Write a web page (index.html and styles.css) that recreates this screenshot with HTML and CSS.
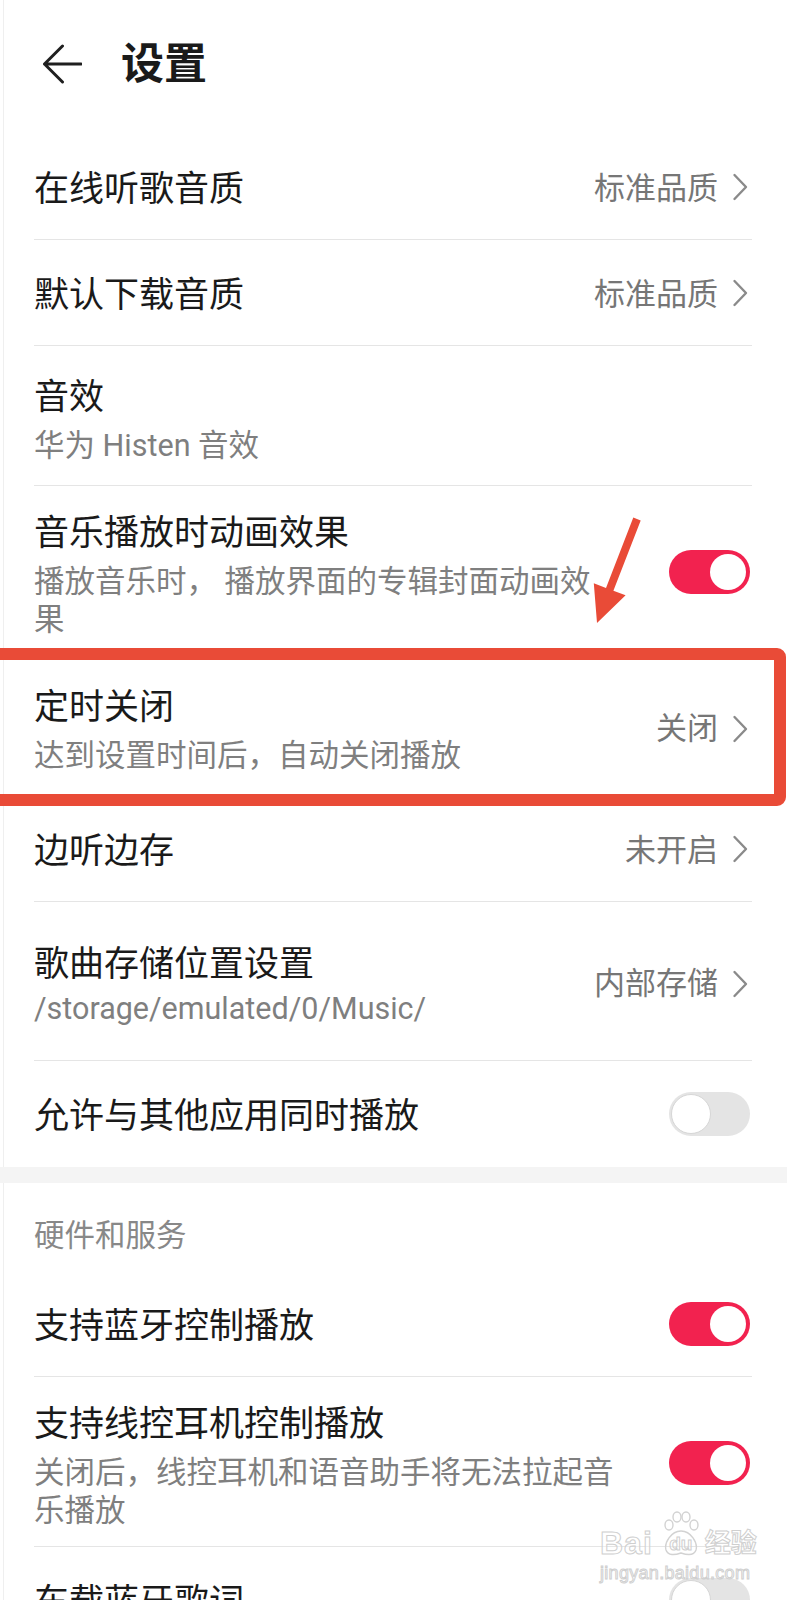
FILE: index.html
```html
<!DOCTYPE html>
<html lang="zh-CN">
<head>
<meta charset="utf-8">
<title>设置</title>
<link rel="stylesheet" href="styles.css">
</head>
<body>
<div class="page">
  <header class="topbar">
    <svg class="back" viewBox="0 0 40 40"><path d="M39 20H2.5M20.5 2L2.5 20L20.5 38" fill="none" stroke="#1f1f1f" stroke-width="3" stroke-linecap="round" stroke-linejoin="round"/></svg>
    <h1 class="title">设置</h1>
  </header>

  <section class="group">
    <div class="row">
      <div class="text"><div class="label">在线听歌音质</div></div>
      <div class="value">标准品质</div>
      <svg class="chev" viewBox="0 0 16 28"><polyline points="2.5,2 14,14 2.5,26" fill="none" stroke="#8a8a8a" stroke-width="2.4" stroke-linecap="round" stroke-linejoin="round"/></svg>
    </div>
    <div class="row">
      <div class="text"><div class="label">默认下载音质</div></div>
      <div class="value">标准品质</div>
      <svg class="chev" viewBox="0 0 16 28"><polyline points="2.5,2 14,14 2.5,26" fill="none" stroke="#8a8a8a" stroke-width="2.4" stroke-linecap="round" stroke-linejoin="round"/></svg>
    </div>
    <div class="row two">
      <div class="text">
        <div class="label">音效</div>
        <div class="desc">华为 Histen 音效</div>
      </div>
    </div>
    <div class="row three">
      <div class="text">
        <div class="label">音乐播放时动画效果</div>
        <div class="desc">播放音乐时， 播放界面的专辑封面动画效果</div>
      </div>
      <div class="switch on"><span class="knob"></span></div>
    </div>
    <div class="row two">
      <div class="text">
        <div class="label">定时关闭</div>
        <div class="desc">达到设置时间后，自动关闭播放</div>
      </div>
      <div class="value">关闭</div>
      <svg class="chev" viewBox="0 0 16 28"><polyline points="2.5,2 14,14 2.5,26" fill="none" stroke="#8a8a8a" stroke-width="2.4" stroke-linecap="round" stroke-linejoin="round"/></svg>
    </div>
    <div class="row">
      <div class="text"><div class="label">边听边存</div></div>
      <div class="value">未开启</div>
      <svg class="chev" viewBox="0 0 16 28"><polyline points="2.5,2 14,14 2.5,26" fill="none" stroke="#8a8a8a" stroke-width="2.4" stroke-linecap="round" stroke-linejoin="round"/></svg>
    </div>
    <div class="row path">
      <div class="text">
        <div class="label">歌曲存储位置设置</div>
        <div class="desc">/storage/emulated/0/Music/</div>
      </div>
      <div class="value">内部存储</div>
      <svg class="chev" viewBox="0 0 16 28"><polyline points="2.5,2 14,14 2.5,26" fill="none" stroke="#8a8a8a" stroke-width="2.4" stroke-linecap="round" stroke-linejoin="round"/></svg>
    </div>
    <div class="row last">
      <div class="text"><div class="label">允许与其他应用同时播放</div></div>
      <div class="switch off"><span class="knob"></span></div>
    </div>
  </section>

  <div class="band"></div>

  <section class="group">
    <div class="group-title">硬件和服务</div>
    <div class="row">
      <div class="text"><div class="label">支持蓝牙控制播放</div></div>
      <div class="switch on"><span class="knob"></span></div>
    </div>
    <div class="row three">
      <div class="text">
        <div class="label">支持线控耳机控制播放</div>
        <div class="desc">关闭后，线控耳机和语音助手将无法拉起音乐播放</div>
      </div>
      <div class="switch on"><span class="knob"></span></div>
    </div>
    <div class="row">
      <div class="text"><div class="label">车载蓝牙歌词</div></div>
      <div class="switch off"><span class="knob"></span></div>
    </div>
  </section>

  <div class="highlight"></div>
  <svg class="pointer" viewBox="0 0 80 130"><polygon points="53.3,17.6 26,87.9 13.8,83.3 17,123 45.6,95.3 33.4,90.7 60.7,20.4" fill="#e94b37"/></svg>

  <div class="watermark">
    <div class="wm-line">
      <span class="wm-bai">Bai</span>
      <span class="wm-du">
        <svg class="wm-paw" viewBox="0 0 40 46"><g fill="none" stroke="#d2d2d2" stroke-width="1.4"><ellipse cx="8" cy="14" rx="4" ry="5"/><ellipse cx="16" cy="6" rx="4" ry="5"/><ellipse cx="25" cy="6" rx="4" ry="5"/><ellipse cx="33" cy="14" rx="4" ry="5"/><path d="M20 20C10 20 3 32 5 39C7 45 14 44 20 42C26 44 33 45 35 39C37 32 30 20 20 20Z"/></g></svg>
        <span class="wm-du-text">du</span>
      </span>
      <span class="wm-jy">经验</span>
    </div>
    <div class="wm-url">jingyan.baidu.com</div>
  </div>
</div>
</body>
</html>
```

FILE: styles.css
```css
* {
  box-sizing: border-box;
  margin: 0;
  padding: 0;
}

html, body {
  background: #ffffff;
}

body {
  font-family: Roboto, "Noto Sans CJK SC", sans-serif;
  color: #1a1a1a;
  width: 787px;
}

.page {
  position: relative;
  width: 787px;
  height: 1600px;
  overflow: hidden;
  background: #ffffff;
  box-shadow: inset 3px 0 0 #ffffff, inset 4px 0 0 #efefef;
}

/* top bar */
.topbar {
  height: 134px;
  padding: 0 0 6px 42px;
  display: flex;
  align-items: center;
}

.back {
  width: 40px;
  height: 40px;
  flex: none;
}

.title {
  margin-left: 39px;
  font-size: 43px;
  line-height: 50px;
  font-weight: 700;
  color: #1a1a1a;
}

/* list */
.group {
  padding: 0 35px 0 34px;
}

.row {
  display: flex;
  align-items: center;
  min-height: 106px;
  border-bottom: 1px solid #e5e5e5;
}

.row.last {
  border-bottom: none;
}

.row.two {
  padding: 26px 0 20px;
}

.row.three {
  padding: 22px 0 16px;
}

.row.path {
  padding: 37px 0 32px;
}

.text {
  flex: 1;
  min-width: 0;
}

.label {
  font-size: 35px;
  padding-top: 6px;
  line-height: 40px;
  color: #1a1a1a;
}

.desc {
  font-size: 30.5px;
  line-height: 38px;
  color: #7f7f7f;
  margin-top: 9px;
}

.row.path .desc {
  margin-top: 5px;
}

.value {
  font-size: 31px;
  padding-top: 4px;
  line-height: 36px;
  color: #767676;
  flex: none;
}

.row.two .value,
.row.path .value {
  padding-top: 0;
}

.chev {
  width: 16px;
  height: 28px;
  margin: 0 4px 0 14px;
  flex: none;
}

.switch {
  width: 81px;
  height: 44px;
  border-radius: 22px;
  margin: 0 2px 0 52px;
  flex: none;
  display: flex;
  align-items: center;
  padding: 0 4px;
}

.row.three .switch {
  margin-bottom: 4px;
}

.switch.on {
  background: #f2224f;
  justify-content: flex-end;
}

.switch.off {
  background: #e4e4e4;
  padding: 0 2px;
}

.knob {
  display: block;
  width: 36px;
  height: 36px;
  border-radius: 50%;
  background: #ffffff;
}

.switch.off .knob {
  width: 40px;
  height: 40px;
  border: 1px solid #d6d6d6;
}

.band {
  height: 16px;
  background: #f4f4f4;
}

.group-title {
  padding: 38px 0 20px;
  font-size: 30.5px;
  line-height: 30px;
  color: #888888;
}

/* annotation overlay */
.highlight {
  position: absolute;
  left: -12px;
  top: 648px;
  width: 798px;
  height: 158px;
  border: 12px solid #e94b37;
  border-radius: 9px;
}

.pointer {
  position: absolute;
  left: 580px;
  top: 500px;
  width: 80px;
  height: 130px;
}

/* watermark */
.watermark {
  position: absolute;
  left: 600px;
  top: 1510px;
  font-family: "Liberation Sans", Arial, "Noto Sans CJK SC", sans-serif;
  color: rgba(255, 255, 255, 0.4);
  -webkit-text-stroke: 1px #cfcfcf;
}

.wm-line {
  display: flex;
  align-items: flex-end;
  height: 48px;
}

.wm-bai {
  font-size: 32px;
  line-height: 30px;
  font-weight: 700;
  letter-spacing: 1px;
}

.wm-du {
  position: relative;
  width: 40px;
  height: 48px;
  margin-left: 8px;
  display: flex;
  align-items: flex-end;
  justify-content: center;
}

.wm-paw {
  position: absolute;
  left: 0;
  top: 0;
  width: 40px;
  height: 48px;
}

.wm-du-text {
  position: relative;
  font-size: 19px;
  line-height: 20px;
  font-weight: 700;
  margin-bottom: 4px;
}

.wm-jy {
  margin-left: 4px;
  font-size: 26px;
  line-height: 30px;
  font-weight: 700;
}

.wm-url {
  margin-top: 6px;
  font-size: 18px;
  line-height: 18px;
  letter-spacing: 0.3px;
}
```
